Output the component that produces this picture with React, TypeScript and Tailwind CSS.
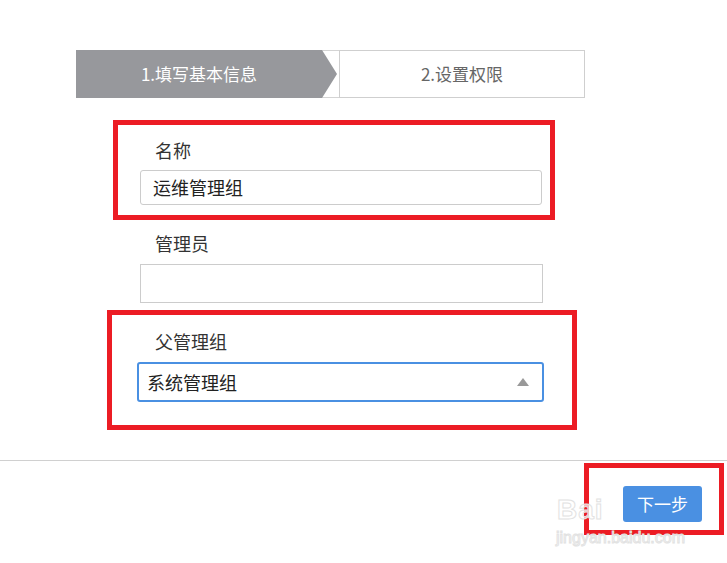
import React from 'react'

const font = { fontFamily: '"Noto Sans CJK SC", "Liberation Sans", sans-serif' }

function Steps() {
  return (
    <div className="ml-[76px] mt-[50px] flex h-[48px] w-[509px]">
      <div className="flex w-[246px] items-center justify-center bg-[#97989c] text-[17px] text-white">
        1.填写基本信息
      </div>
      <div className="relative w-[17px] border-y border-[#d4d4d4]">
        <svg width="17" height="48" viewBox="0 0 17 48" className="absolute -top-px left-0">
          <polygon points="0,0 15,24 0,48" fill="#97989c" />
        </svg>
      </div>
      <div className="flex flex-1 items-center justify-center border border-[#cfcfcf] text-[17px] text-[#666]">
        2.设置权限
      </div>
    </div>
  )
}

// faint site watermark, bottom right
function Watermark() {
  return (
    <div className="pointer-events-none absolute left-[555px] top-[484px] h-[66px] w-[140px]" style={{ fontFamily: '"Liberation Sans", sans-serif' }}>
      <span className="absolute left-[2px] top-[12px] text-[28px] font-bold leading-none tracking-[1px] text-white/70 [-webkit-text-stroke:1px_#e2e2e2]">
        Bai
      </span>
      <span className="absolute left-[1px] top-[46px] text-[16px] leading-none text-white/70 [-webkit-text-stroke:1px_#e2e2e2]">
        jingyan.baidu.com
      </span>
    </div>
  )
}

export default function App() {
  return (
    <div className="relative h-[563px] w-[727px] overflow-hidden bg-white text-[#333]" style={font}>
      <Steps />

      <div className="ml-[140px] flex w-[403px] flex-col">
        <label className="mt-[40px] pl-[15px] text-[18px] leading-[24px]">名称</label>
        <div className="mt-[8px] flex h-[35px] w-[402px] items-center rounded-[3px] border border-[#ccc] pl-[12px] text-[18px] text-[#222]">
          运维管理组
        </div>

        <label className="mt-[26px] pl-[15px] text-[18px] leading-[24px]">管理员</label>
        <div className="mt-[9px] h-[39px] w-[403px] border border-[#ccc]" />

        <label className="mt-[26px] pl-[15px] text-[18px] leading-[24px]">父管理组</label>
        <div className="-ml-[3px] mt-[9px] flex h-[40px] w-[407px] items-center justify-between rounded-[3px] border-2 border-[#4a90e2] pl-[8px] pr-[13px] text-[18px] text-[#222]">
          <span>系统管理组</span>
          <svg width="12" height="8" viewBox="0 0 12 8">
            <polygon points="6,0 12,8 0,8" fill="#999" />
          </svg>
        </div>
      </div>

      <div className="mt-[58px] h-px w-full bg-[#d0d0d0]" />

      <div className="ml-[623px] mt-[25px] flex h-[36px] w-[79px] items-center justify-center rounded-[3px] bg-[#4a90e2] text-[17px] text-white">
        下一步
      </div>

      {/* red annotation boxes */}
      <div className="absolute left-[113px] top-[120px] h-[100px] w-[442px] border-[5px] border-[#ec1c24]" />
      <div className="absolute left-[107px] top-[310px] h-[120px] w-[470px] border-[5px] border-[#ec1c24]" />
      <div className="absolute left-[584px] top-[463px] h-[72px] w-[140px] border-[5px] border-[#ec1c24]" />

      <Watermark />
    </div>
  )
}
